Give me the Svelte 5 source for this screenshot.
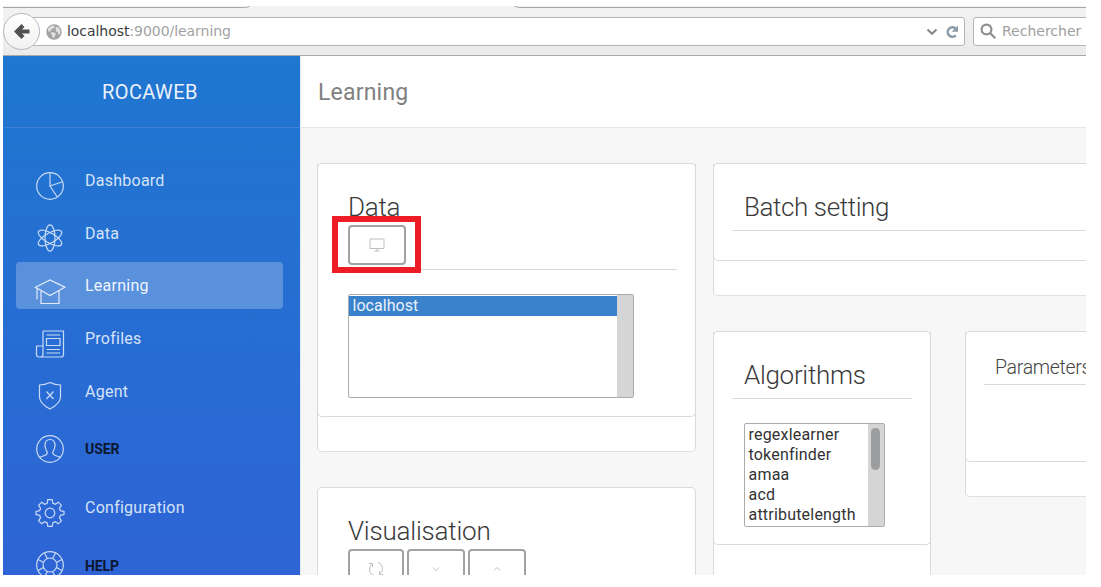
<script>
  const nav = [
    { label: 'Dashboard', icon: 'pie' },
    { label: 'Data', icon: 'atom' },
    { label: 'Learning', icon: 'cap', active: true },
    { label: 'Profiles', icon: 'news' },
    { label: 'Agent', icon: 'shield' },
    { label: 'USER', icon: 'user', heading: true },
    { label: 'Configuration', icon: 'gear' },
    { label: 'HELP', icon: 'help', heading: true }
  ];
  const algorithms = ['regexlearner', 'tokenfinder', 'amaa', 'acd', 'attributelength'];
</script>

<div class="window">
  <div class="chrome">
    <svg class="tabs" width="1083" height="3" viewBox="0 0 1083 3">
      <path d="M247 0Q245 1.5 241 1.5H0M511 0Q514 1.5 518 1.5H1083" />
    </svg>
    <div class="toolbar">
      <div class="url">
        <svg class="globe" width="16" height="16" viewBox="0 0 16 16">
          <circle cx="8" cy="8" r="7.7" fill="#a3a3a3" />
          <path d="M2 4.5 5 2l3-.5 1 1.5-2 1.5L5 6 4 8 2 7zM5.500 8l3 .5L10 10l-2 4-1.500-.5L6 11 4.500 9.500zM10 3l3 .5 1.500 3.500L14 10l-1.500 1-.5-2.500-2-1L9.500 5z" fill="#dedede" />
        </svg>
        <span class="address"><b>localhost</b>:9000/learning</span>
        <svg class="caret" width="12" height="8" viewBox="0 0 12 8"><path d="M1.500 1.500 6 5.800l4.500-4.300" /></svg>
        <svg class="reload" width="14" height="14" viewBox="0 0 14 14">
          <path d="M10.300 3.300A4.700 4.700 0 1 0 10.800 10.300" fill="none" stroke="#8c99a7" stroke-width="2.500" />
          <path d="M13 .5v6.300H6.700z" fill="#8c99a7" />
        </svg>
      </div>
      <div class="search">
        <svg width="17" height="17" viewBox="0 0 17 17"><circle cx="6.500" cy="6.500" r="4.900" /><path d="m10.300 10.300 5 5" /></svg>
        <span>Rechercher</span>
      </div>
    </div>
    <div class="back">
      <svg width="18" height="17" viewBox="0 0 18 17"><path d="M10 2.500 4 8.500l6 6M4.500 8.500H16.500" /></svg>
    </div>
  </div>

  <div class="app">
    <aside>
      <div class="brand">ROCAWEB</div>
      <nav>
        {#each nav as item}
          <div class="item" class:active={item.active} class:heading={item.heading}>
            <svg width="32" height="32" viewBox="0 0 32 32">
              {#if item.icon === 'pie'}
                <circle cx="16" cy="16" r="13.300" />
                <path d="M16 2.700V16l12.500-4.300M16 16l7.300 11" />
              {:else if item.icon === 'atom'}
                <ellipse cx="16" cy="16" rx="5" ry="13.200" />
                <ellipse cx="16" cy="16" rx="5" ry="13.200" transform="rotate(60 16 16)" />
                <ellipse cx="16" cy="16" rx="5" ry="13.200" transform="rotate(120 16 16)" />
              {:else if item.icon === 'cap'}
                <path d="M1.500 12.200 16 5l14.800 7.200L16 20.500zM3 12.500v12M7 15.500v13h18v-13" />
              {:else if item.icon === 'news'}
                <path d="M9 3h20.500v23.500q0 2.500-2.500 2.500H5q-2.500 0-2.500-2.500V18H9M9 3v23q0 3-2.500 3M12.500 7h13.500M12.500 10.500H26v7H12.500zM12.500 21.500H26M12.500 25H26" />
              {:else if item.icon === 'shield'}
                <path d="M16 2.500q5 2.500 10.500 2.500v12c0 5.500-5 9-10.500 12C10.500 26 5.500 22.500 5.500 17V5Q11 5 16 2.500zM12.500 11.500l7 7.500M19.500 11.500l-7 7.500" />
              {:else if item.icon === 'user'}
                <circle cx="16" cy="16" r="13.300" />
                <path d="M5.500 24.500c3-2 7.500-1.500 7.800-4.500.2-1.500-2.300-3-2.300-7.500C11 8.500 13 6.500 16 6.500s5 2 5 6c0 4.500-2.500 6-2.300 7.500.3 3 4.800 2.500 7.800 4.500" />
              {:else if item.icon === 'gear'}
                <circle cx="16" cy="16" r="4.800" />
                <path d="M13.800 2.700h4.400l.7 3.600 2.400 1 3-2.100 3.100 3.100-2 3 1 2.400 3.600.7v3.200l-3.600.7-1 2.400 2 3-3.100 3.100-3-2-2.400 1-.7 3.500h-4.400l-.7-3.500-2.400-1-3 2-3.100-3.100 2-3-1-2.400-3.600-.7v-3.200l3.600-.7 1-2.400-2-3 3.100-3.100 3 2.100 2.400-1z" />
              {:else}
                <circle cx="16" cy="16" r="13.300" />
                <circle cx="16" cy="16" r="7" />
                <path d="m9.500 13.500-5.300-3M13.500 9.500l-3-5.300M18.500 9.500l3-5.300M22.500 13.500l5.300-3M9.500 18.500l-5.300 3M13.500 22.500l-3 5.300M18.500 22.500l3 5.300M22.500 18.500l5.300 3" />
              {/if}
            </svg>
            <span>{item.label}</span>
          </div>
        {/each}
      </nav>
    </aside>

    <main>
      <header><span>Learning</span></header>
      <div class="content">
        <div class="left">
          <section class="card data">
            <div class="inner">
              <h2><span>Data</span></h2>
              <div class="buttons">
                <div class="btn" style:width="58px">
                  <svg width="16" height="14" viewBox="0 0 16 14"><path d="M1 1h14v9.500H1zM8 10.500V13M5.500 13h5" /></svg>
                  <div class="highlight"></div>
                </div>
              </div>
              <div class="rule"></div>
              <div class="list">
                <div class="options"><div class="option selected"><span>localhost</span></div></div>
                <div class="track"></div>
              </div>
            </div>
          </section>
          <section class="card vis">
            <h2><span>Visualisation</span></h2>
            <div class="buttons">
              <div class="btn" style:width="56px">
                <svg width="16" height="16" viewBox="0 0 16 16"><path d="M6 14.500A6.500 6.500 0 0 1 3.500 3.500M1 2.500h3.500v3.500M10 1.500A6.500 6.500 0 0 1 12.500 12.500M15 13.500h-3.500v-3.500" /></svg>
              </div>
              <div class="btn" style:width="58px">
                <svg width="8" height="6" viewBox="0 0 8 6"><path d="m1 1.500 3 3 3-3" /></svg>
              </div>
              <div class="btn" style:width="58px">
                <svg width="8" height="6" viewBox="0 0 8 6"><path d="m1 4.500 3-3 3 3" /></svg>
              </div>
            </div>
          </section>
        </div>
        <div class="right">
          <section class="card batch">
            <div class="inner">
              <h2><span>Batch setting</span></h2>
              <div class="rule"></div>
            </div>
          </section>
          <div class="pair">
            <section class="card algo">
              <div class="inner">
                <h2><span>Algorithms</span></h2>
                <div class="rule"></div>
                <div class="list">
                  <div class="options">
                    {#each algorithms as name}<div class="option"><span>{name}</span></div>{/each}
                  </div>
                  <div class="track"><div class="thumb"></div></div>
                </div>
              </div>
            </section>
            <section class="card params">
              <div class="inner">
                <h3><span>Parameters</span></h3>
                <div class="rule"></div>
              </div>
            </section>
          </div>
        </div>
      </div>
    </main>
  </div>
</div>

<style>
  :global(body) { background: #fff; overflow: hidden; }
  .window, .window * { box-sizing: border-box; }
  .window {
    width: 1083px; height: 569px; margin: 6px 0 0 3px; overflow: hidden;
    display: flex; flex-direction: column; font-family: Roboto, sans-serif;
  }
  svg { display: block; flex: none; fill: none; }

  .chrome {
    position: relative; height: 50px; flex: none; padding-top: 11px;
    background: linear-gradient(#f2f2f2, #ebebeb); border-bottom: 1px solid #a9a9a9;
    font-family: "DejaVu Sans", sans-serif; font-size: 14px;
  }
  .tabs { position: absolute; top: 0; left: 0; stroke: #a8a8a8; }
  .toolbar { display: flex; gap: 8px; padding-left: 18px; }
  .url, .search { height: 29px; display: flex; align-items: center; background: #fff; border: 1px solid #b4b4b4; border-radius: 3px; }
  .url { width: 944px; padding: 0 5px 0 24px; }
  .url span, .search span { padding-bottom: 2px; }
  .address { margin-left: 5px; flex: 1; color: #a2a2a2; letter-spacing: -.05px; }
  .address b { font-weight: 400; color: #3c3c3c; }
  .caret { stroke: #888a85; stroke-width: 2.200; margin-right: 7px; }
  .search { flex: 1; margin-right: -8px; padding-left: 6px; color: #a0a0a0; gap: 5px; }
  .search svg { stroke: #8f8f8f; stroke-width: 2.200; }
  .back {
    position: absolute; left: 0; top: 7px; width: 37px; height: 37px; border-radius: 50%;
    border: 1px solid #b3b8c2; background: linear-gradient(#fff, #f1f1f1);
    display: flex; align-items: center; justify-content: center;
  }
  .back svg { stroke: #505050; stroke-width: 4.200; }

  .app { flex: 1; min-height: 0; display: flex; }
  aside { width: 297px; flex: none; background: linear-gradient(#1f77d0, #2e64d5); color: #d6e3f7; }
  .brand {
    height: 72px; line-height: 72px; padding-left: 99px; font-size: 20px; letter-spacing: .4px; color: #eaf1fb;
    border-bottom: 1px solid #3d82d7;
  }
  nav { padding: 29px 17px 0 13px; display: flex; flex-direction: column; gap: 5.700px; }
  .item { height: 47px; flex: none; display: flex; padding-left: 18px; border-radius: 4px; font-size: 16px; }
  .item svg { margin-top: 12.500px; stroke: #c9dbf5; stroke-width: 1.200; }
  .item span { margin-left: 19px; line-height: 20px; margin-top: 14px; letter-spacing: .25px; }
  .item.active { background: #5a91dc; color: #eef4fd; }
  .item.active svg { stroke: #e1ebfa; }
  .heading { margin-bottom: 11px; }
  .heading span { color: #0b1730; font-size: 14px; font-weight: 700; margin-top: 19px; letter-spacing: -.1px; }

  main { flex: 1; min-width: 0; background: #f7f7f7; border-left: 1px solid #dfe9f6; }
  header { height: 72px; background: #fff; border-bottom: 1px solid #e6e6e6; padding-left: 17px; line-height: 73px; font-size: 23px; letter-spacing: .2px; color: #808080; }
  .content { display: flex; gap: 17px; padding: 35px 0 0 16px; align-items: flex-start; }
  .left { width: 379px; flex: none; display: flex; flex-direction: column; gap: 35px; }
  .right { width: 560px; flex: none; display: flex; flex-direction: column; gap: 35px; }
  .pair { display: flex; gap: 34px; align-items: flex-start; }
  .card { background: #fff; border: 1px solid #dadada; border-bottom-color: #e0e0e0; border-radius: 5px; }
  .inner { margin: 0 -1px; border: 1px solid #dadada; border-top: 0; border-radius: 0 0 5px 5px; }
  .data { height: 289px; }
  .data .inner { height: 253px; }
  .vis { height: 200px; }
  .batch { height: 133px; }
  .batch .inner { height: 97px; }
  .algo { width: 218px; height: 300px; flex: none; }
  .algo .inner { height: 213px; }
  .params { width: 300px; height: 166px; flex: none; }
  .params .inner { height: 130px; }
  h2, h3 { margin: 0; font-weight: 300; color: #3a3a3a; }
  h2 { font-size: 26px; line-height: 30px; padding: 28px 0 0 30px; letter-spacing: -.3px; }
  .vis h2 { letter-spacing: -.2px; }
  .batch h2 { letter-spacing: -.4px; }
  h3 { font-size: 19.500px; line-height: 24px; padding: 24px 0 0 29px; letter-spacing: -.3px; color: #444; }
  .rule { height: 1px; background: #dadada; margin: 8px 18px 0; }
  .batch .rule, .params .rule { margin-right: 0; }
  .params .rule { margin-top: 4px; }
  .buttons { display: flex; gap: 3px; padding: 3px 0 0 30px; }
  .btn { position: relative; height: 40px; border: 2px solid #a2a2a2; border-radius: 4px; display: flex; align-items: center; justify-content: center; }
  .btn svg { stroke: #bfbfbf; }
  .data .rule { margin-top: 4px; }
  .highlight { position: absolute; left: -18px; top: -11px; width: 89px; height: 57px; border: 6px solid #ee1c25; }
  .list { margin: 24px 0 0 30px; height: 104px; border: 1px solid #ababab; border-radius: 2px; display: flex; }
  .data .list { width: 286px; }
  .algo .list { width: 141px; }
  .options { flex: 1; padding-top: 1px; overflow: hidden; }
  .option { height: 20px; line-height: 20px; font-size: 16px; padding-left: 3.500px; letter-spacing: .2px; color: #333; white-space: nowrap; }
  .selected { background: #3a81cb; color: #e9f1fb; letter-spacing: .05px; }
  .track { width: 16px; background: #d5d5d5; padding: 4px 4px 0 3px; }
  .thumb { height: 42px; border-radius: 5px; background: #9b9d9e; }
</style>
